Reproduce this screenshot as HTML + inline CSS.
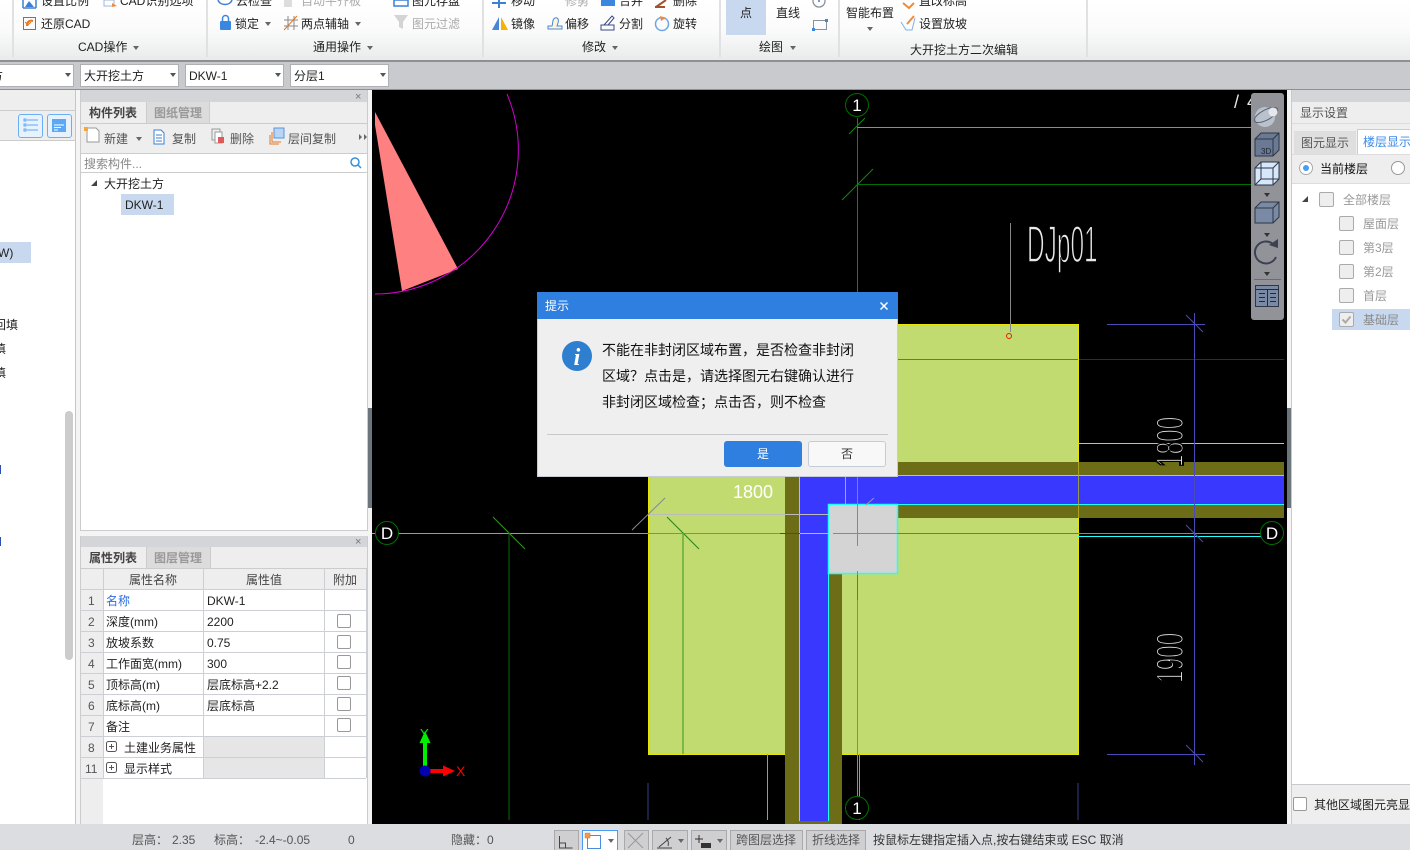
<!DOCTYPE html>
<html><head><meta charset="utf-8">
<style>
html,body{margin:0;padding:0;background:#c8cacd}
#p{position:relative;width:1410px;height:850px;overflow:hidden;background:#c8cacd;font-family:"Liberation Sans","Noto Sans CJK SC",sans-serif;font-size:12px;color:#222}
#p div,#p span,#p svg{position:absolute}
.t{white-space:nowrap;line-height:14px;font-size:12px}
.g{color:#aaa}
.m{color:#555}
.cb{width:11px;height:11px;border:1px solid #999;border-radius:2px;background:#fff}
.sq{width:13px;height:13px;border:1px solid #aaa;border-radius:2px;background:#eee}
.ar{width:0;height:0;margin-left:1px;border-left:3px solid transparent;border-right:3px solid transparent;border-top:4px solid #666}
.sep{width:2px;top:0;height:57px;background:#dfe1e3}
.combo{top:64px;height:21px;background:#fff;border:1px solid #aeb0b3}
.sb{top:830px;height:20px;background:#cfcfd1;border:1px solid #a9a9ab;border-bottom:0;box-sizing:border-box}
.hl{background:#c8d9ef}
</style></head><body><div id="p">

<!-- ribbon -->
<div style="left:0;top:0;width:1410px;height:60px;background:linear-gradient(#fff 0,#fbfbfb 50%,#e9ebeb 100%)"></div>
<div style="left:0;top:60px;width:1410px;height:2px;background:#8e9092"></div>
<div class="sep" style="left:12px"></div><div class="sep" style="left:206px"></div><div class="sep" style="left:482px"></div><div class="sep" style="left:719px"></div><div class="sep" style="left:838px"></div><div class="sep" style="left:1086px"></div>

<div class="hl" style="left:726px;top:0;width:40px;height:35px"></div>

<span class="t" style="left:41px;top:-6px">设置比例</span>
<span class="t" style="left:120px;top:-6px">CAD识别选项</span>
<span class="t" style="left:236px;top:-6px">云检查</span>
<span class="t g" style="left:301px;top:-6px">自动平齐板</span>
<span class="t" style="left:412px;top:-6px">图元存盘</span>
<span class="t" style="left:511px;top:-6px">移动</span>
<span class="t g" style="left:565px;top:-6px">修剪</span>
<span class="t" style="left:619px;top:-6px">合并</span>
<span class="t" style="left:673px;top:-6px">删除</span>
<span class="t" style="left:919px;top:-6px">直改标高</span>

<span class="t" style="left:41px;top:17px">还原CAD</span>
<span class="t" style="left:235px;top:17px">锁定</span>
<span class="t" style="left:301px;top:17px">两点辅轴</span>
<span class="t g" style="left:412px;top:17px">图元过滤</span>
<span class="t" style="left:511px;top:17px">镜像</span>
<span class="t" style="left:565px;top:17px">偏移</span>
<span class="t" style="left:619px;top:17px">分割</span>
<span class="t" style="left:673px;top:17px">旋转</span>
<span class="t" style="left:919px;top:17px">设置放坡</span>
<span class="t" style="left:740px;top:6px">点</span>
<span class="t" style="left:776px;top:6px">直线</span>
<span class="t" style="left:846px;top:6px">智能布置</span>

<span class="t" style="left:78px;top:40px">CAD操作</span>
<span class="t" style="left:313px;top:40px">通用操作</span>
<span class="t" style="left:582px;top:40px">修改</span>
<span class="t" style="left:759px;top:40px">绘图</span>
<span class="t" style="left:910px;top:43px">大开挖土方二次编辑</span>

<div class="ar" style="left:132px;top:46px"></div><div class="ar" style="left:366px;top:46px"></div><div class="ar" style="left:611px;top:46px"></div><div class="ar" style="left:789px;top:46px"></div>
<div class="ar" style="left:264px;top:22px"></div><div class="ar" style="left:354px;top:22px"></div><div class="ar" style="left:866px;top:27px"></div>

<svg style="left:0;top:0" width="1000" height="36" viewBox="0 0 1000 36" fill="none">
<path d="M23 8H36M23 8V0M36 0V8" stroke="#3b7fd6" stroke-width="1.500"/><path d="M25 7l4-6 5 6z" fill="#3b7fd6"/>
<rect x="23.500" y="17.500" width="12" height="12" stroke="#3b7fd6"/><path d="M27 26c0-5 3-6 6-5" stroke="#e8761e" stroke-width="2"/><path d="M25 22l3 3 3-3" stroke="#e8761e"/>
<path d="M104 0h10v6h-10z" stroke="#9db7d8"/><path d="M112 3l5 3-5 1z" fill="#ef8c3c"/>
<path d="M218 0c2 6 12 6 14 0" stroke="#3b7fd6" stroke-width="1.500"/>
<rect x="220" y="21" width="11" height="9" rx="1" fill="#3b87e0"/><path d="M222.500 21v-2.500a3 3 0 016 0v2.500" stroke="#3b87e0" stroke-width="1.500"/>
<rect x="284" y="0" width="8" height="7" fill="#ddd"/>
<path d="M284 20h14M284 26h14M288 16v14M294 16v14" stroke="#8a8a8a"/><path d="M284 30l13-14" stroke="#e8761e"/>
<rect x="394" y="0" width="14" height="6" stroke="#3b7fd6" stroke-width="1.500"/>
<path d="M394 15h14l-5 7v7l-4-2v-5z" fill="#d4d4d4"/>
<path d="M492 3h14M499 0v8" stroke="#3b7fd6" stroke-width="2"/>
<path d="M584 0l-4 7" stroke="#bbb"/>
<rect x="601" y="0" width="14" height="6" fill="#3b87e0"/>
<path d="M656 7l10-7M655 7h10" stroke="#a0522d" stroke-width="2"/>
<path d="M499 17v13h-7z" fill="#4a86d8"/><path d="M501 17v13h7z" fill="#f5b400"/>
<path d="M548 29v-3h4c1-2 0-7 3-8s4 2 3 5l-1 3h5v3z" stroke="#4a86d8" fill="#fdf4dc"/>
<path d="M601 25h13v5h-13zM604 25l8-9 2 2-6 7" stroke="#3a4a8a"/>
<circle cx="662" cy="24" r="6.500" stroke="#6aa6e6" stroke-width="1.500"/><path d="M660 16l6 2-5 3z" fill="#ef8c3c"/>
<circle cx="819" cy="1" r="6" stroke="#8a9299" stroke-width="1.300"/><circle cx="819" cy="1" r="1" fill="#3b7fd6"/>
<rect x="813.500" y="20.500" width="13" height="9" stroke="#8a9299"/><rect x="812" y="28" width="3" height="3" fill="#3b87e0"/><rect x="825" y="19" width="3" height="3" fill="#3b87e0"/>
<path d="M903 3l6 5 5-5" stroke="#ef8c3c" stroke-width="2"/>
<path d="M901 22l5 8h6l3-12" stroke="#7fb0e6"/><path d="M907 24l7-8" stroke="#ef8c3c" stroke-width="2"/>
</svg>

<!-- combos -->
<div class="combo" style="left:-10px;width:82px"></div><span class="t" style="left:-9px;top:69px">方</span><div class="ar" style="left:64px;top:73px;border-top-color:#555"></div>
<div class="combo" style="left:80px;width:97px"></div><span class="t" style="left:84px;top:69px">大开挖土方</span><div class="ar" style="left:169px;top:73px;border-top-color:#555"></div>
<div class="combo" style="left:185px;width:97px"></div><span class="t" style="left:189px;top:69px">DKW-1</span><div class="ar" style="left:274px;top:73px;border-top-color:#555"></div>
<div class="combo" style="left:290px;width:97px"></div><span class="t" style="left:294px;top:69px">分层1</span><div class="ar" style="left:379px;top:73px;border-top-color:#555"></div>
<div style="left:0;top:89px;width:1410px;height:1px;background:#8e9092"></div>

<!-- gutters -->
<div style="left:76px;top:90px;width:296px;height:734px;background:#f4f4f4"></div>
<div style="left:1287px;top:90px;width:5px;height:734px;background:#f4f4f4"></div>

<!-- left panel -->
<div style="left:0;top:90px;width:76px;height:734px;background:#fff"></div>
<div style="left:0;top:90px;width:76px;height:20px;background:#eee"></div>
<div style="left:0;top:110px;width:76px;height:1px;background:#ccc"></div>
<div style="left:0;top:111px;width:76px;height:29px;background:#eee"></div>
<div style="left:0;top:140px;width:76px;height:1px;background:#ccc"></div>
<div style="left:18px;top:114px;width:23px;height:22px;background:#e7f2fd;border:1px solid #6aaef5;border-radius:3px"></div>
<div style="left:47px;top:114px;width:23px;height:22px;background:#e7f2fd;border:1px solid #6aaef5;border-radius:3px"></div>
<svg style="left:18px;top:114px" width="54" height="24" fill="none"><path d="M9 6h11M9 11h11M9 16h11" stroke="#5ca8f5"/><path d="M6 5h2v2H6zM6 10h2v2H6zM6 15h2v2H6z" stroke="#5ca8f5"/><rect x="34" y="5" width="14" height="13" fill="#5ca8f5"/><path d="M36 11h10M36 13.500h7M36 16h4" stroke="#fff"/></svg>
<div class="hl" style="left:0;top:242px;width:31px;height:21px"></div>
<span class="t" style="left:-6px;top:246px">(W)</span>
<span class="t" style="left:-6px;top:318px">回填</span>
<span class="t" style="left:-6px;top:342px">填</span>
<span class="t" style="left:-6px;top:366px">填</span>
<div style="left:65px;top:411px;width:8px;height:249px;background:#ccc;border-radius:4px"></div>
<div style="left:-1px;top:465px;width:2px;height:9px;background:#2a4fb0"></div>
<div style="left:-1px;top:537px;width:2px;height:9px;background:#2a4fb0"></div>
<div style="left:75px;top:90px;width:1px;height:734px;background:#c4c6c9"></div>

<!-- component panel -->
<div style="left:81px;top:90px;width:286px;height:440px;background:#fff"></div>
<div style="left:81px;top:90px;width:286px;height:12px;background:#d3d5d9"></div>
<span class="t" style="left:355px;top:90px;font-size:11px;color:#777">×</span>
<div style="left:81px;top:102px;width:286px;height:21px;background:#eee;border-bottom:1px solid #ccc"></div>
<div style="left:146px;top:102px;width:64px;height:21px;background:#dcdcdc;border-left:1px solid #ccc;border-right:1px solid #ccc;box-sizing:border-box"></div>
<span class="t" style="left:89px;top:106px;font-weight:bold;color:#444">构件列表</span>
<span class="t" style="left:154px;top:106px;color:#999;font-weight:bold">图纸管理</span>
<div style="left:81px;top:124px;width:286px;height:29px;background:#eee;border-bottom:1px solid #ccc"></div>
<svg style="left:81px;top:124px" width="286" height="29" fill="none">
<path d="M6 4h9l3 3v11H6z" fill="#fff" stroke="#999"/><path d="M3 3h4v4H3z" fill="#f7a43a"/>
<path d="M73 6h7l3 3v11H73z" fill="#fff" stroke="#3b7fd6"/><path d="M75 11h6M75 14h6M75 17h6" stroke="#3b7fd6"/>
<path d="M131 5h8v11h-8z" stroke="#999"/><path d="M134 8h7v11h-7z" fill="#fff" stroke="#999"/><rect x="137" y="13" width="6" height="6" fill="#e05a5a"/>
<rect x="193" y="4" width="10" height="10" fill="#b8d4f7" stroke="#5c94d8"/><path d="M191 8v10h9M189 11v9h9" stroke="#e8761e"/>
<path d="M278 10l3 3-3 3zM283 10l3 3-3 3z" fill="#666"/>
</svg>
<span class="t m" style="left:104px;top:132px">新建</span><div class="ar" style="left:135px;top:137px"></div>
<span class="t m" style="left:172px;top:132px">复制</span>
<span class="t m" style="left:230px;top:132px">删除</span>
<span class="t m" style="left:288px;top:132px">层间复制</span>
<span class="t" style="left:84px;top:157px;color:#888">搜索构件...</span>
<svg style="left:349px;top:156px" width="14" height="14" fill="none"><circle cx="6" cy="6" r="4" stroke="#3b8fd6" stroke-width="1.500"/><path d="M9 9l3 3" stroke="#3b8fd6" stroke-width="1.500"/></svg>
<div style="left:81px;top:172px;width:286px;height:1px;background:#ccc"></div>
<svg style="left:90px;top:179px" width="8" height="8"><path d="M1 7h6V1z" fill="#444"/></svg>
<span class="t" style="left:104px;top:177px">大开挖土方</span>
<div class="hl" style="left:121px;top:194px;width:53px;height:21px"></div>
<span class="t" style="left:125px;top:198px">DKW-1</span>
<div style="left:367px;top:90px;width:1px;height:440px;background:#ccc"></div>
<div style="left:80px;top:90px;width:1px;height:440px;background:#ccc"></div>
<div style="left:80px;top:530px;width:288px;height:1px;background:#ccc"></div>

<!-- props panel -->
<div style="left:81px;top:536px;width:286px;height:288px;background:#fff"></div>
<div style="left:81px;top:536px;width:286px;height:11px;background:#d3d5d9"></div>
<span class="t" style="left:355px;top:535px;font-size:11px;color:#777">×</span>
<div style="left:81px;top:547px;width:286px;height:21px;background:#eee;border-bottom:1px solid #ccc"></div>
<div style="left:146px;top:547px;width:65px;height:21px;background:#dcdcdc;border-left:1px solid #ccc;border-right:1px solid #ccc;box-sizing:border-box"></div>
<span class="t" style="left:89px;top:551px;font-weight:bold;color:#444">属性列表</span>
<span class="t" style="left:154px;top:551px;color:#999;font-weight:bold">图层管理</span>
<div style="left:81px;top:569px;width:22px;height:255px;background:#eee"></div>
<div style="left:103px;top:569px;width:263px;height:21px;background:#eee"></div>
<div style="left:204px;top:737px;width:120px;height:41px;background:#e6e6e6"></div>
<svg style="left:81px;top:569px" width="287" height="212" fill="none" stroke="#ccd0d4">
<path d="M0 20.500H285M0 41.500H285M0 62.500H285M0 83.500H285M0 104.500H285M0 125.500H285M0 146.500H285M0 167.500H285M0 188.500H285M0 209.500H285M22.500 0V209M122.500 0V209M243.500 0V209M285.500 0V209"/>
</svg>
<span class="t" style="left:129px;top:573px;color:#444">属性名称</span><span class="t" style="left:246px;top:573px;color:#444">属性值</span><span class="t" style="left:333px;top:573px;color:#444">附加</span>
<span class="t m" style="left:88px;top:594px">1</span><span class="t" style="left:106px;top:594px;color:#2a6be0">名称</span><span class="t" style="left:207px;top:594px">DKW-1</span>
<span class="t m" style="left:88px;top:615px">2</span><span class="t" style="left:106px;top:615px">深度(mm)</span><span class="t" style="left:207px;top:615px">2200</span>
<span class="t m" style="left:88px;top:636px">3</span><span class="t" style="left:106px;top:636px">放坡系数</span><span class="t" style="left:207px;top:636px">0.75</span>
<span class="t m" style="left:88px;top:657px">4</span><span class="t" style="left:106px;top:657px">工作面宽(mm)</span><span class="t" style="left:207px;top:657px">300</span>
<span class="t m" style="left:88px;top:678px">5</span><span class="t" style="left:106px;top:678px">顶标高(m)</span><span class="t" style="left:207px;top:678px">层底标高+2.2</span>
<span class="t m" style="left:88px;top:699px">6</span><span class="t" style="left:106px;top:699px">底标高(m)</span><span class="t" style="left:207px;top:699px">层底标高</span>
<span class="t m" style="left:88px;top:720px">7</span><span class="t" style="left:106px;top:720px">备注</span>
<span class="t m" style="left:88px;top:741px">8</span><span class="t" style="left:124px;top:741px">土建业务属性</span>
<span class="t m" style="left:85px;top:762px">11</span><span class="t" style="left:124px;top:762px">显示样式</span>
<div class="cb" style="left:337px;top:614px;width:12px;height:12px"></div><div class="cb" style="left:337px;top:635px;width:12px;height:12px"></div><div class="cb" style="left:337px;top:655px;width:12px;height:12px"></div><div class="cb" style="left:337px;top:676px;width:12px;height:12px"></div><div class="cb" style="left:337px;top:697px;width:12px;height:12px"></div><div class="cb" style="left:337px;top:718px;width:12px;height:12px"></div>
<svg style="left:105px;top:740px" width="14" height="36" fill="none" stroke="#555"><rect x="1.500" y="1.500" width="10" height="10" rx="2"/><path d="M4 6.500h5M6.500 4v5"/><rect x="1.500" y="22.500" width="10" height="10" rx="2"/><path d="M4 27.500h5M6.500 25v5"/></svg>
<div style="left:80px;top:536px;width:1px;height:288px;background:#ccc"></div>
<div style="left:367px;top:536px;width:1px;height:288px;background:#ccc"></div>

<!-- canvas -->
<div style="left:372px;top:90px;width:915px;height:734px;background:#000"></div>
<div style="left:368px;top:408px;width:4px;height:100px;background:#6c747c"></div>
<div style="left:1287px;top:408px;width:4px;height:100px;background:#6c747c"></div>
<svg style="left:372px;top:90px" width="915" height="734" viewBox="372 90 915 734" fill="none">
<polygon points="375,112 458,269 402,291 375,125" fill="#ff8080"/>
<path d="M507 94A144 144 0 0 1 375 294" stroke="#d400d4" stroke-width="1"/>

<path d="M857.500 118V325" stroke="#0a8a0a"/>
<path d="M857 127.500H1252" stroke="#00f000" stroke-width="1"/>
<path d="M857 184.500H1252" stroke="#007000"/>
<path d="M849 134L865 118M842 200L873 169" stroke="#0a8a0a"/>
<path d="M1078 359.500H1284" stroke="#005000"/>

<rect x="648.500" y="324.500" width="430" height="430" fill="#c2db70" stroke="#e6e600"/>
<path d="M898 359.500H1078" stroke="#3a9a1a"/>

<rect x="785" y="462" width="499" height="56" fill="#6e6d17"/>
<rect x="785" y="476" width="57" height="348" fill="#6e6d17"/>
<rect x="799" y="476" width="485" height="28" fill="#3838ff"/>
<rect x="799" y="476" width="29" height="345" fill="#3838ff"/>
<path d="M799 475.500H1284M828 504.500H1284" stroke="#22ffff"/>
<path d="M799.500 476V821M828.500 574V821" stroke="#22ffff"/>
<rect x="828.500" y="504.500" width="69" height="69" fill="#d4d4d4" stroke="#22ffff" stroke-width="1.500"/>
<path d="M1078.500 462V518" stroke="#b0b020" opacity=".8"/>

<path d="M1078 443.500H1284" stroke="#22ffff"/>
<path d="M388 533.500H648" stroke="#999"/><path d="M372 533.500H388" stroke="#33ee33"/>
<path d="M648 533.500H784" stroke="#888"/><path d="M780 533.500H800" stroke="#0a7a0a"/><path d="M800 533.500H828" stroke="#bbb"/><path d="M833 533.500H898" stroke="#888"/><path d="M898 533.500H1078" stroke="#5a8a3a"/>
<path d="M1078 533.500H1262" stroke="#888"/><path d="M1078 536.500H1262" stroke="#22ffff"/>
<path d="M648 514.500H828" stroke="#bbb" stroke-width="1"/>
<path d="M632 530L665 498" stroke="#888"/>
<path d="M667 517L699 549M493 517L525 549" stroke="#2e8a1e" stroke-width="1.200"/>
<path d="M683 533V754" stroke="#64ab3c" stroke-width="1.500"/>
<path d="M509 533V820" stroke="#0a6a0a"/>
<path d="M857.500 470V546" stroke="#888"/><path d="M857.500 571V820" stroke="#888"/><path d="M857.500 575V600" stroke="#e8401a"/>
<path d="M845.500 477V504" stroke="#aaa"/>
<path d="M866 505L874 498" stroke="#999"/>
<path d="M859.500 754V820" stroke="#22cccc"/>

<path d="M1010.500 223V332" stroke="#888"/>
<circle cx="1009" cy="336" r="2.500" stroke="#e02000"/>

<path d="M1107 324.500H1205M1107 754.500H1205M1194.500 313V765" stroke="#4a4ab8"/>
<path d="M1186 315L1203 332M1186 745L1203 762M1186 525L1203 542" stroke="#4a4ab8"/>
<path d="M648 783V820M1078 783V820" stroke="#3a3a8a"/>
<path d="M767.500 754V820" stroke="#22cccc"/>

<g font-family="Liberation Sans" fill="#e8e8e8">
<text x="0" y="0" font-size="52" transform="translate(1027,262) scale(.47,1)" stroke="#000" stroke-width="1.600">DJp01</text>
<text x="0" y="0" font-size="39" transform="translate(1183,467) rotate(-90) scale(.58,1)" stroke="#000" stroke-width="2">1800</text>
<text x="0" y="0" font-size="39" transform="translate(1183,683) rotate(-90) scale(.58,1)" stroke="#000" stroke-width="2">1900</text>
<text x="1234" y="108" font-size="18">/</text><text x="1247" y="108" font-size="18">4</text>
</g>
<text x="733" y="498" font-family="Liberation Sans" font-size="18" fill="#fff">1800</text>

<g stroke="#007000" fill="#000" stroke-width="1">
<circle cx="857" cy="105" r="11.500"/><circle cx="857" cy="808" r="11.500"/><circle cx="387" cy="533" r="11.500"/><circle cx="1272" cy="533" r="11.500"/>
</g>
<g font-family="Liberation Sans" font-size="17" fill="#fff" text-anchor="middle">
<text x="857" y="111">1</text><text x="857" y="814">1</text><text x="387" y="539">D</text><text x="1272" y="539">D</text>
</g>
<path d="M425 740V768" stroke="#00ee00" stroke-width="4"/><path d="M425 731l5.500 12h-11z" fill="#00ee00"/>
<path d="M428 771H446" stroke="#ff0000" stroke-width="4"/><path d="M455 771l-12-5.500v11z" fill="#ff0000"/>
<circle cx="425" cy="771" r="5.500" fill="#0000b0"/>
<text x="420" y="738" font-family="Liberation Sans" font-size="13" fill="#00ee00">Y</text>
<text x="456" y="776" font-family="Liberation Sans" font-size="14" fill="#ff0000">X</text>
</svg>

<!-- float toolbar -->
<div style="left:1251px;top:93px;width:33px;height:227px;background:#919398;border-radius:3px"></div>
<svg style="left:1251px;top:93px" width="33" height="227" fill="none">
<circle cx="14" cy="24" r="10" fill="#b9c1cc"/><ellipse cx="15" cy="22" rx="13" ry="5" stroke="#5a6272" transform="rotate(-28 15 22)"/><circle cx="22" cy="19" r="4.500" fill="#e4e8ec"/>
<path d="M4 46l6-6h18v17l-6 6H4z" fill="#6a7a94" stroke="#2f3645"/><path d="M4 46h18v17M22 46l6-6" stroke="#2f3645"/>
<text x="10" y="61" font-family="Liberation Sans" font-size="8" fill="#1c2230">3D</text>
<path d="M4 75l6-6h18v17l-6 6H4z" fill="#d6e6fb" stroke="#2f3645"/><path d="M4 75h18v17M22 75l6-6M10 69v17h18M10 86l-6 6" stroke="#2f3645"/>
<path d="M13 100h6l-3 4z" fill="#333"/>
<path d="M4 115l6-6h18v15l-6 6H4z" fill="#7a8aa4" stroke="#2f3645"/><path d="M4 115h18v15M22 115l6-6" stroke="#2f3645"/>
<path d="M13 140h6l-3 4z" fill="#333"/>
<path d="M25 164A11 11 0 1 1 22 151" stroke="#3a4252" stroke-width="2"/><path d="M27 146l0 9-9-3z" fill="#3a4252"/>
<path d="M13 179h6l-3 4z" fill="#333"/>
<path d="M3 186.500H30" stroke="#6a6c72"/>
<rect x="4.500" y="192.500" width="23" height="21" fill="#7a8aa4" stroke="#2f3645"/><path d="M5 196.500h23M16.500 197v16M8 200.500h6M8 204.500h6M8 208.500h6M19 200.500h6M19 204.500h6M19 208.500h6" stroke="#222a38"/>
</svg>

<!-- right panel -->
<div style="left:1292px;top:90px;width:118px;height:734px;background:#fff"></div>
<div style="left:1291px;top:90px;width:1px;height:734px;background:#c8cacd"></div>
<div style="left:1292px;top:90px;width:118px;height:12px;background:#d3d5d9"></div>
<div style="left:1292px;top:102px;width:118px;height:21px;background:#eee;border-bottom:1px solid #ddd"></div>
<span class="t" style="left:1300px;top:106px;color:#555">显示设置</span>
<div style="left:1292px;top:124px;width:118px;height:30px;background:#eee;border-bottom:1px solid #ddd"></div>
<div style="left:1294px;top:131px;width:62px;height:23px;background:#dfdfdf"></div>
<div style="left:1357px;top:129px;width:53px;height:25px;background:#fff;border-top:1px solid #ccc;border-left:1px solid #ccc;box-sizing:border-box"></div>
<span class="t" style="left:1301px;top:136px;color:#555">图元显示</span>
<span class="t" style="left:1363px;top:135px;color:#3c8ce8">楼层显示</span>
<div style="left:1292px;top:155px;width:118px;height:28px;background:#eee;border-bottom:1px solid #ddd"></div>
<div style="left:1299px;top:161px;width:12px;height:12px;border:1px solid #aaa;border-radius:50%;background:#fff"></div>
<div style="left:1303px;top:165px;width:6px;height:6px;border-radius:50%;background:#4a9cf5"></div>
<div style="left:1391px;top:161px;width:12px;height:12px;border:1px solid #999;border-radius:50%;background:#fff"></div>
<span class="t" style="left:1320px;top:162px;color:#111">当前楼层</span>
<svg style="left:1301px;top:195px" width="8" height="8"><path d="M1 7h6V1z" fill="#444"/></svg>
<div class="sq" style="left:1319px;top:192px"></div>
<span class="t g" style="left:1343px;top:193px;color:#999">全部楼层</span>
<div class="sq" style="left:1339px;top:216px"></div><span class="t" style="left:1363px;top:217px;color:#999">屋面层</span>
<div class="sq" style="left:1339px;top:240px"></div><span class="t" style="left:1363px;top:241px;color:#999">第3层</span>
<div class="sq" style="left:1339px;top:264px"></div><span class="t" style="left:1363px;top:265px;color:#999">第2层</span>
<div class="sq" style="left:1339px;top:288px"></div><span class="t" style="left:1363px;top:289px;color:#999">首层</span>
<div class="hl" style="left:1332px;top:309px;width:78px;height:21px"></div>
<div class="sq" style="left:1339px;top:312px"></div><span class="t" style="left:1363px;top:313px;color:#888">基础层</span>
<svg style="left:1340px;top:313px" width="13" height="13" fill="none"><path d="M2.500 6.500l3 3 5-6" stroke="#aaa" stroke-width="2"/></svg>
<div style="left:1292px;top:784px;width:118px;height:40px;background:#eee;border-top:1px solid #c8cacd;box-sizing:border-box"></div>
<div style="left:1293px;top:797px;width:12px;height:12px;border:1px solid #999;border-radius:2px;background:#fff"></div>
<span class="t" style="left:1314px;top:798px;color:#222">其他区域图元亮显</span>

<!-- dialog -->
<div style="left:537px;top:292px;width:361px;height:185px;background:#efefef;box-shadow:0 0 0 1px #c6ccd6 inset"></div>
<div style="left:537px;top:292px;width:361px;height:27px;background:#2e7fe0"></div>
<span class="t" style="left:545px;top:299px;color:#fff">提示</span>
<svg style="left:879px;top:301px" width="10" height="10" fill="none"><path d="M1.500 1.500l7 7M8.500 1.500l-7 7" stroke="#fff" stroke-width="1.500"/></svg>
<svg style="left:562px;top:341px" width="30" height="30"><circle cx="15" cy="15" r="15" fill="#2e7fd0"/><text x="15" y="24" text-anchor="middle" font-family="Liberation Serif" font-style="italic" font-weight="bold" font-size="24" fill="#fff">i</text></svg>
<span class="t" style="left:602px;top:343px;font-size:14px;color:#111">不能在非封闭区域布置，是否检查非封闭</span>
<span class="t" style="left:602px;top:369px;font-size:14px;color:#111">区域？点击是，请选择图元右键确认进行</span>
<span class="t" style="left:602px;top:395px;font-size:14px;color:#111">非封闭区域检查；点击否，则不检查</span>
<div style="left:547px;top:434px;width:341px;height:1px;background:#c6c8cc"></div>
<div style="left:724px;top:441px;width:78px;height:26px;background:#2e7fe0;border-radius:3px"></div>
<span class="t" style="left:757px;top:447px;color:#fff">是</span>
<div style="left:808px;top:441px;width:76px;height:24px;background:#f8f8f8;border:1px solid #c6ccd6;border-radius:3px"></div>
<span class="t" style="left:841px;top:447px;color:#333">否</span>

<!-- status -->
<div style="left:0;top:824px;width:1410px;height:26px;background:#dcdde0"></div>
<span class="t m" style="left:132px;top:833px">层高：</span><span class="t m" style="left:172px;top:833px">2.35</span>
<span class="t m" style="left:214px;top:833px">标高：</span><span class="t m" style="left:255px;top:833px">-2.4~-0.05</span>
<span class="t m" style="left:348px;top:833px">0</span>
<span class="t m" style="left:451px;top:833px">隐藏：</span><span class="t m" style="left:487px;top:833px">0</span>
<div class="sb" style="left:554px;width:25px"></div>
<div class="sb" style="left:582px;width:36px;background:#fff;border-color:#4a9cf5"></div>
<div class="sb" style="left:624px;width:25px"></div>
<div class="sb" style="left:652px;width:36px"></div>
<div class="sb" style="left:691px;width:36px"></div>
<div class="sb" style="left:730px;width:73px"></div>
<div class="sb" style="left:806px;width:60px"></div>
<svg style="left:554px;top:830px" width="175" height="20" fill="none">
<path d="M5.500 6v12h13" stroke="#444"/><path d="M5.500 13h6v5" stroke="#444"/>
<rect x="33.500" y="5.500" width="13" height="13" stroke="#4a8ce0"/><rect x="31" y="3" width="5" height="5" fill="#f39a4a" stroke="#c87a30" stroke-width=".5"/>
<path d="M74 3l15 15M89 3L74 18" stroke="#999"/>
<path d="M103 18h15M105 17l12-10" stroke="#444"/><path d="M112 8a8 8 0 012 8" stroke="#444"/>
<path d="M145 5v8M141 9h8" stroke="#333"/><rect x="147" y="13" width="10" height="5" fill="#333"/>
</svg>
<div class="ar" style="left:607px;top:839px"></div><div class="ar" style="left:677px;top:839px"></div><div class="ar" style="left:716px;top:839px"></div>
<span class="t m" style="left:736px;top:833px">跨图层选择</span>
<span class="t m" style="left:812px;top:833px">折线选择</span>
<span class="t" style="left:873px;top:833px;color:#333">按鼠标左键指定插入点,按右键结束或 ESC 取消</span>

</div></body></html>
